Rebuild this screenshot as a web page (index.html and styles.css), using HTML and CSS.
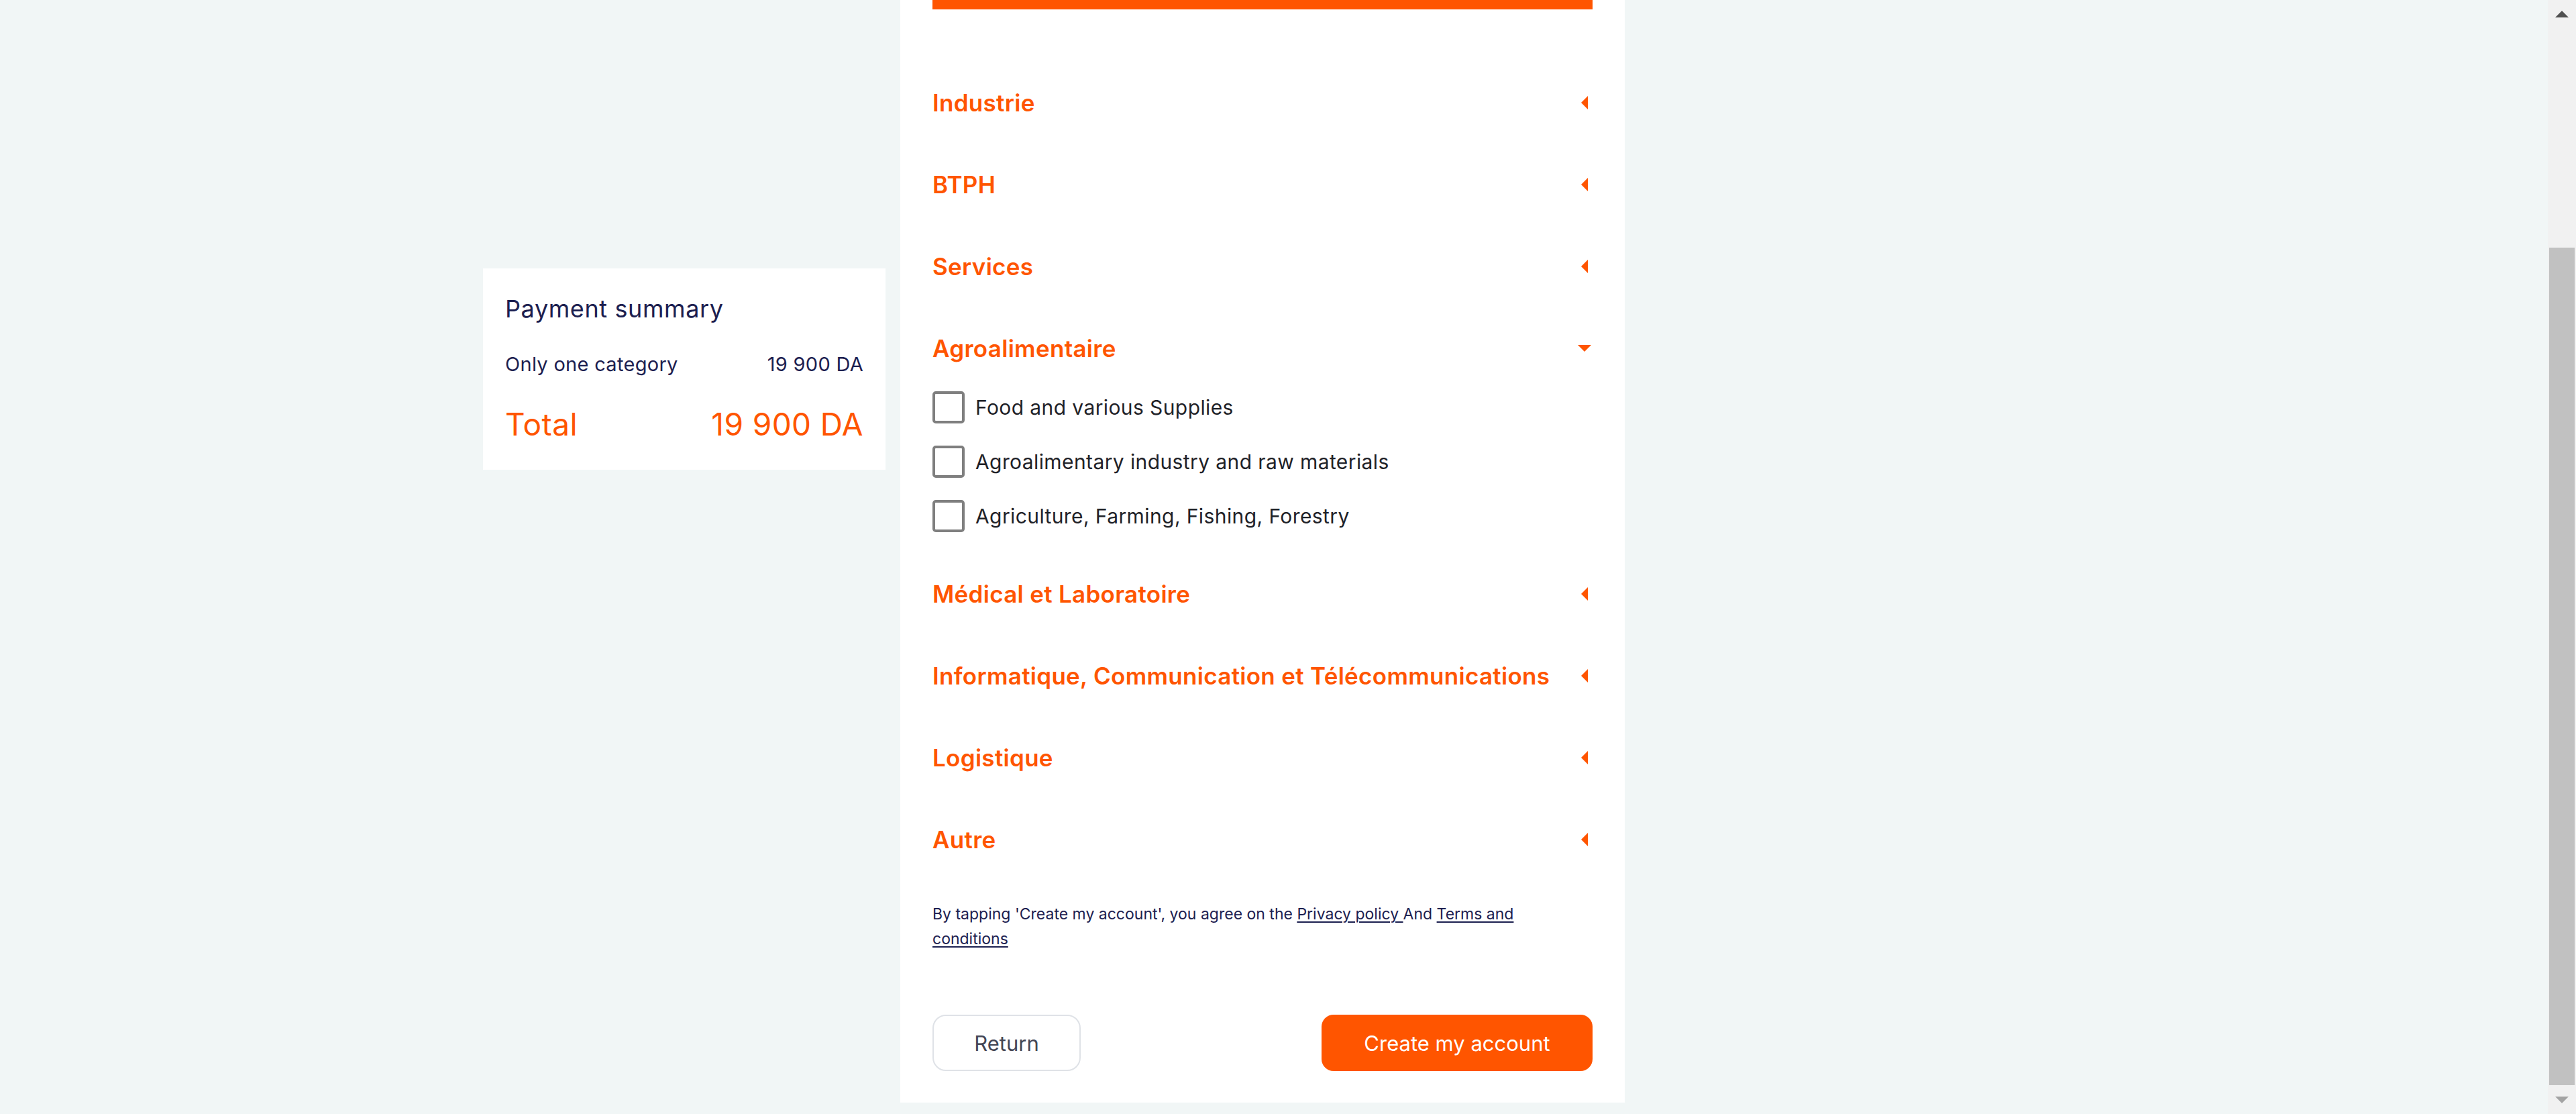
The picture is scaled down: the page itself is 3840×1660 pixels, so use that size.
FILE: index.html
```html
<!DOCTYPE html>
<html lang="en">
<head>
<meta charset="utf-8">
<title>Create account - categories</title>
<link rel="stylesheet" href="styles.css">
</head>
<body>
<div class="page">
  <main class="content">
    <aside class="summary">
      <h2 class="summary-title">Payment summary</h2>
      <div class="summary-row"><span>Only one category</span><span>19 900 DA</span></div>
      <div class="summary-total"><span>Total</span><span>19 900 DA</span></div>
    </aside>
    <section class="panel">
      <div class="progress"></div>
      <ul class="categories">
        <li class="cat"><div class="cat-head"><span>Industrie</span><span class="caret-slot"><i class="caret-left"></i></span></div></li>
        <li class="cat"><div class="cat-head"><span>BTPH</span><span class="caret-slot"><i class="caret-left"></i></span></div></li>
        <li class="cat"><div class="cat-head"><span>Services</span><span class="caret-slot"><i class="caret-left"></i></span></div></li>
        <li class="cat open"><div class="cat-head"><span>Agroalimentaire</span><span class="caret-slot"><i class="caret-down"></i></span></div>
          <ul class="subs">
            <li><label class="check"><span class="box"></span><span>Food and various Supplies</span></label></li>
            <li><label class="check"><span class="box"></span><span>Agroalimentary industry and raw materials</span></label></li>
            <li><label class="check"><span class="box"></span><span>Agriculture, Farming, Fishing, Forestry</span></label></li>
          </ul>
        </li>
        <li class="cat"><div class="cat-head"><span>Médical et Laboratoire</span><span class="caret-slot"><i class="caret-left"></i></span></div></li>
        <li class="cat"><div class="cat-head"><span>Informatique, Communication et Télécommunications</span><span class="caret-slot"><i class="caret-left"></i></span></div></li>
        <li class="cat"><div class="cat-head"><span>Logistique</span><span class="caret-slot"><i class="caret-left"></i></span></div></li>
        <li class="cat"><div class="cat-head"><span>Autre</span><span class="caret-slot"><i class="caret-left"></i></span></div></li>
      </ul>
      <p class="terms">By tapping 'Create my account', you agree on the <a class="link">Privacy policy&nbsp;</a>And <a class="link">Terms and</a> <a class="link">conditions</a></p>
      <div class="actions">
        <button class="btn btn-return" type="button">Return</button>
        <button class="btn btn-create" type="button">Create my account</button>
      </div>
    </section>
  </main>
  <div class="scrollbar">
    <span class="sb-btn"><i class="sb-up"></i></span>
    <div class="sb-track"><div class="sb-thumb"></div></div>
    <span class="sb-btn"><i class="sb-down"></i></span>
  </div>
</div>
</body>
</html>
```

FILE: styles.css
```css
* { box-sizing: border-box; }

html, body {
  margin: 0;
  padding: 0;
  height: 100%;
}

body {
  background: #f1f6f6;
  font-family: Inter, Lato, "Liberation Sans", sans-serif;
  color: #1c2050;
  overflow: hidden;
}

.page {
  display: flex;
  height: 1660px;
}

.content {
  flex: 1;
  display: flex;
  align-items: flex-start;
  gap: 22px;
  padding-left: 720px;
}

/* Summary card */
.summary {
  width: 600px;
  margin-top: 400px;
  background: #ffffff;
  padding: 38px 33px 40px;
}

.summary-title {
  margin: 0;
  font-size: 36px;
  line-height: 44px;
  font-weight: 400;
  letter-spacing: 0.6px;
  color: #1c2050;
}

.summary-row {
  display: flex;
  justify-content: space-between;
  margin-top: 43px;
  font-size: 29px;
  line-height: 36px;
  letter-spacing: 0.3px;
  color: #1c2050;
}

.summary-total {
  display: flex;
  justify-content: space-between;
  margin-top: 43px;
  font-size: 46px;
  line-height: 56px;
  letter-spacing: 0.4px;
  color: #ff5500;
}

/* Main panel */
.panel {
  width: 1080px;
  height: 1643px;
  background: #ffffff;
  padding: 0 48px 47px;
  display: flex;
  flex-direction: column;
}

.progress {
  height: 14px;
  background: #ff5500;
}

.categories {
  list-style: none;
  margin: 78px 0 0;
  padding: 0;
}

.cat-head {
  display: flex;
  align-items: center;
  justify-content: space-between;
  height: 122px;
  font-size: 35px;
  font-weight: 600;
  letter-spacing: 0.3px;
  color: #ff5500;
}

.caret-slot {
  width: 20px;
  height: 20px;
  margin-right: 2px;
  display: flex;
  align-items: center;
  justify-content: center;
}

.caret-left {
  width: 0;
  height: 0;
  border-top: 10px solid transparent;
  border-bottom: 10px solid transparent;
  border-right: 10px solid #ff5500;
}

.caret-down {
  width: 0;
  height: 0;
  border-left: 10px solid transparent;
  border-right: 10px solid transparent;
  border-top: 10px solid #ff5500;
}

.subs {
  list-style: none;
  margin: 0;
  padding: 3px 0 31px;
  display: flex;
  flex-direction: column;
  gap: 33px;
}

.check {
  display: flex;
  align-items: center;
  gap: 16px;
  font-size: 30px;
  letter-spacing: 0.4px;
  color: #1f2228;
}

.box {
  width: 48px;
  height: 48px;
  border: 4px solid #7f7f7f;
  border-radius: 5px;
  background: #ffffff;
  flex: none;
}

.terms {
  margin: 32px 0 0;
  font-size: 23px;
  line-height: 37px;
  color: #1c2050;
}

.link {
  color: #1c2050;
  text-decoration: underline;
  text-decoration-thickness: 2px;
  text-underline-offset: 3px;
}

.actions {
  margin-top: auto;
  display: flex;
  justify-content: space-between;
}

.btn {
  height: 84px;
  font-family: Inter, Lato, "Liberation Sans", sans-serif;
  font-size: 31px;
  cursor: pointer;
}

.btn-return {
  width: 221px;
  background: #ffffff;
  color: #434655;
  border: 2px solid #dfe2e7;
  border-radius: 20px;
}

.btn-create {
  width: 404px;
  background: #ff5500;
  color: #ffffff;
  border: none;
  border-radius: 18px;
}

/* Window scrollbar (page is scrolled to the bottom) */
.scrollbar {
  width: 42px;
  flex: none;
  background: #f1f1f1;
  display: flex;
  flex-direction: column;
}

.sb-btn {
  height: 42px;
  flex: none;
  display: flex;
  align-items: center;
  justify-content: center;
}

.sb-up {
  width: 0;
  height: 0;
  border-left: 10px solid transparent;
  border-right: 10px solid transparent;
  border-bottom: 10px solid #505050;
}

.sb-down {
  width: 0;
  height: 0;
  border-left: 10px solid transparent;
  border-right: 10px solid transparent;
  border-top: 10px solid #a3a3a3;
}

.sb-track {
  flex: 1;
  padding: 327px 2px 0;
}

.sb-thumb {
  height: 1248px;
  background: #c1c1c1;
}
```
